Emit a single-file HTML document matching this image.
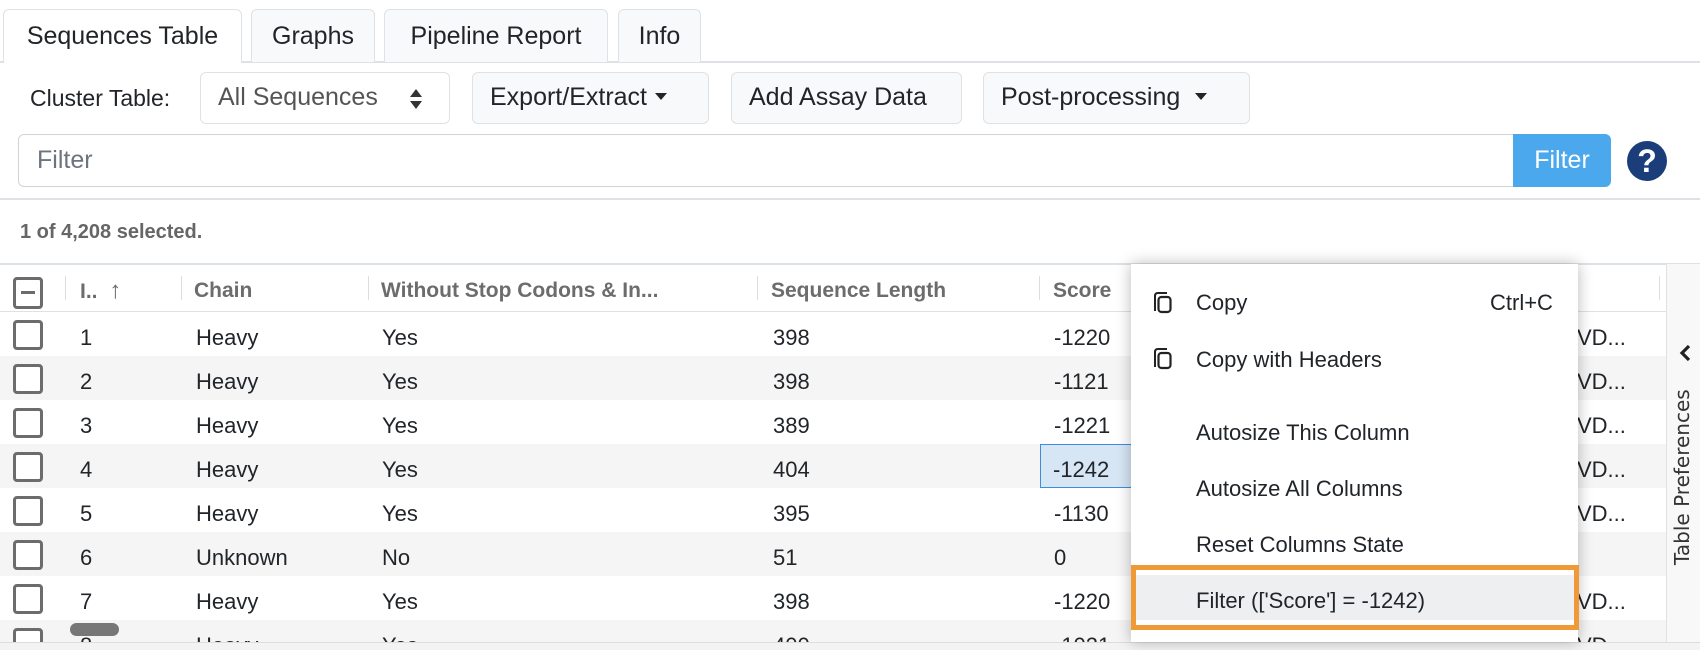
<!DOCTYPE html>
<html><head><style>
*{box-sizing:border-box;margin:0;padding:0}
body{width:1700px;height:650px;overflow:hidden;background:#fff;font-family:"Liberation Sans",Arial,sans-serif;color:#212529;position:relative}
.a{position:absolute}
.tab{position:absolute;top:9px;height:53px;border:1px solid #dee2e6;border-bottom:none;border-radius:6px 6px 0 0;background:#f8f9fa;font-size:25px;line-height:52px;text-align:center;color:#212529}
.btn{position:absolute;top:72px;height:52px;border:1.5px solid #dee2e6;border-radius:6px;background:#f8f9fa;font-size:25px;line-height:49px;padding-left:17px;color:#212529}
.caret{display:inline-block;width:0;height:0;border-left:6px solid transparent;border-right:6px solid transparent;border-top:7px solid #212529;vertical-align:middle;margin-left:8px;margin-top:-4px}
.row{position:absolute;left:0;width:1666px;height:44px;font-size:22px;line-height:52px}
.row span{position:absolute}
.cb{position:absolute;left:13px;top:8px;width:30px;height:30px;border:3px solid #6c6c6c;border-radius:4px;background:#fff}
.hd{position:absolute;top:267px;height:48px;font-size:21px;font-weight:bold;color:#6c6c6c;line-height:48px}
.sep{position:absolute;top:276px;width:1px;height:24px;background:#ddd}
.mi{position:absolute;left:1196px;font-size:22px;color:#212529}
</style></head><body>
<div class="a" style="left:0;top:61px;width:1700px;height:1.5px;background:#dee2e6"></div>
<div class="tab" style="left:3px;width:239px;background:#fff;height:54px">Sequences Table</div>
<div class="tab" style="left:251px;width:124px">Graphs</div>
<div class="tab" style="left:384px;width:224px">Pipeline Report</div>
<div class="tab" style="left:618px;width:83px">Info</div>
<div class="a" style="left:30px;top:72px;line-height:52px;font-size:23px">Cluster Table:</div>
<div class="btn" style="left:200px;width:250px;background:#fff;color:#555">All Sequences</div>
<svg class="a" style="left:408px;top:88px" width="16" height="22"><path d="M8 1 L14 9 H2 Z M8 21 L14 13 H2 Z" fill="#333"/></svg>
<div class="btn" style="left:472px;width:237px">Export/Extract<span class="caret"></span></div>
<div class="btn" style="left:731px;width:231px">Add Assay Data</div>
<div class="btn" style="left:983px;width:267px">Post-processing <span class="caret"></span></div>
<div class="a" style="left:18px;top:134px;width:1500px;height:53px;border:1.5px solid #ced4da;border-radius:6px 0 0 6px;font-size:25px;line-height:50px;padding-left:18px;color:#6c757d">Filter</div>
<div class="a" style="left:1513px;top:134px;width:98px;height:53px;background:#4ca8ec;border-radius:0 6px 6px 0;color:#fff;font-size:25px;line-height:53px;text-align:center">Filter</div>
<div class="a" style="left:1627px;top:141px;width:40px;height:40px;border-radius:50%;background:#1b3e7b;color:#fff;font-size:32px;font-weight:bold;line-height:40px;text-align:center">?</div>
<div class="a" style="left:0;top:198px;width:1700px;height:1.5px;background:#dee2e6"></div>
<div class="a" style="left:20px;top:221px;font-size:20px;font-weight:bold;color:#666">1 of 4,208 selected.</div>
<div class="a" style="left:0;top:263px;width:1700px;height:1.5px;background:#dde2e6"></div>
<div class="a" style="left:0;top:311px;width:1666px;height:1.5px;background:#dde2e6"></div>
<div class="cb" style="top:277px;width:30px;height:32px"><div style="position:absolute;left:5px;top:11px;width:14px;height:3px;background:#6c6c6c"></div></div>
<div class="sep" style="left:65px"></div>
<div class="hd" style="left:80px">I.. <span style="font-weight:normal;font-size:24px;margin-left:6px">&#8593;</span></div>
<div class="sep" style="left:181px"></div>
<div class="hd" style="left:194px">Chain</div>
<div class="sep" style="left:368px"></div>
<div class="hd" style="left:381px">Without Stop Codons &amp; In...</div>
<div class="sep" style="left:757px"></div>
<div class="hd" style="left:771px">Sequence Length</div>
<div class="sep" style="left:1039px"></div>
<div class="hd" style="left:1053px">Score</div>
<div class="sep" style="left:1659px"></div>

<div class="row" style="top:312px;background:#fff"><div class="cb"></div><span style="left:80px">1</span><span style="left:196px">Heavy</span><span style="left:382px">Yes</span><span style="left:773px">398</span><span style="left:1054px">-1220</span><span style="left:1577px">VD...</span></div>
<div class="row" style="top:356px;background:#f5f5f5"><div class="cb"></div><span style="left:80px">2</span><span style="left:196px">Heavy</span><span style="left:382px">Yes</span><span style="left:773px">398</span><span style="left:1054px">-1121</span><span style="left:1577px">VD...</span></div>
<div class="row" style="top:400px;background:#fff"><div class="cb"></div><span style="left:80px">3</span><span style="left:196px">Heavy</span><span style="left:382px">Yes</span><span style="left:773px">389</span><span style="left:1054px">-1221</span><span style="left:1577px">VD...</span></div>
<div class="row" style="top:444px;background:#f5f5f5"><div class="cb"></div><span style="left:80px">4</span><span style="left:196px">Heavy</span><span style="left:382px">Yes</span><span style="left:773px">404</span><span style="left:1040px;top:0;width:92px;height:44px;background:#d7e6f5;border:1.5px solid #3d8de0;padding-left:12px;line-height:49px">-1242</span><span style="left:1577px">VD...</span></div>
<div class="row" style="top:488px;background:#fff"><div class="cb"></div><span style="left:80px">5</span><span style="left:196px">Heavy</span><span style="left:382px">Yes</span><span style="left:773px">395</span><span style="left:1054px">-1130</span><span style="left:1577px">VD...</span></div>
<div class="row" style="top:532px;background:#f5f5f5"><div class="cb"></div><span style="left:80px">6</span><span style="left:196px">Unknown</span><span style="left:382px">No</span><span style="left:773px">51</span><span style="left:1054px">0</span></div>
<div class="row" style="top:576px;background:#fff"><div class="cb"></div><span style="left:80px">7</span><span style="left:196px">Heavy</span><span style="left:382px">Yes</span><span style="left:773px">398</span><span style="left:1054px">-1220</span><span style="left:1577px">VD...</span></div>
<div class="row" style="top:620px;background:#f5f5f5;overflow:hidden;height:22px"><div class="cb"></div><span style="left:80px">8</span><span style="left:196px">Heavy</span><span style="left:382px">Yes</span><span style="left:773px">400</span><span style="left:1054px">-1021</span><span style="left:1577px">VD...</span></div>
<div class="a" style="left:70px;top:623px;width:49px;height:13px;border-radius:7px;background:#777"></div>
<div class="a" style="left:0;top:642px;width:1700px;height:8px;background:#f3f3f3;border-top:1.5px solid #ddd"></div>
<div class="a" style="left:1666px;top:264px;width:34px;height:378px;background:#f8f8f8;border-left:1.5px solid #dde2e6"></div>
<div class="a" style="left:1672px;top:353px;width:20px;color:#333;writing-mode:vertical-rl;transform:rotate(180deg);white-space:nowrap;line-height:20px;height:212px;font-family:'DejaVu Sans',sans-serif;font-size:20px">Table Preferences</div>
<svg class="a" style="left:1677px;top:343px" width="16" height="20"><path d="M12 3 L5 10 L12 17" fill="none" stroke="#222" stroke-width="3.2"/></svg>
<div class="a" style="left:1131px;top:264px;width:447px;height:378px;background:#fff;box-shadow:0 0 14px rgba(0,0,0,.28)"></div>
<svg class="a" style="left:1152px;top:290px" width="22" height="24"><path d="M3 21 V6 Q3 3 6 3 H15" fill="none" stroke="#222" stroke-width="2"/><rect x="6.5" y="7" width="12" height="15" rx="3" fill="none" stroke="#222" stroke-width="2.2"/></svg>
<div class="mi" style="top:290px">Copy</div>
<div class="mi" style="left:1490px;top:290px">Ctrl+C</div>
<svg class="a" style="left:1152px;top:346px" width="22" height="24"><path d="M3 21 V6 Q3 3 6 3 H15" fill="none" stroke="#222" stroke-width="2"/><rect x="6.5" y="7" width="12" height="15" rx="3" fill="none" stroke="#222" stroke-width="2.2"/></svg>
<div class="mi" style="top:347px">Copy with Headers</div>
<div class="mi" style="top:420px">Autosize This Column</div>
<div class="mi" style="top:476px">Autosize All Columns</div>
<div class="mi" style="top:532px">Reset Columns State</div>
<div class="a" style="left:1131px;top:565px;width:448px;height:65px;border:5.5px solid #ef9a36;background:#fff"><div style="position:absolute;left:0;top:5px;right:0;bottom:5px;background:#edeff0"></div></div>
<div class="mi" style="top:588px">Filter (['Score'] = -1242)</div>
</body></html>
